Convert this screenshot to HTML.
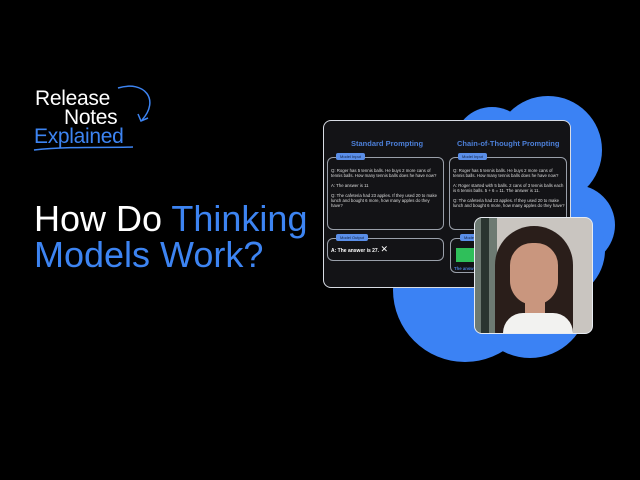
<!DOCTYPE html>
<html><head><meta charset="utf-8"><style>
*{margin:0;padding:0;box-sizing:border-box}
body{width:640px;height:480px;background:#000;overflow:hidden;position:relative;font-family:"Liberation Sans",sans-serif}
.a{position:absolute}
.t{color:#fff;font-size:36px;letter-spacing:0;line-height:1}
.b{color:#3d84f2}
.box{position:absolute;border:1px solid #9aa0aa;border-radius:6px}
.lab{position:absolute;background:#5a8ee8;color:#102040;font-size:4px;border-radius:2px;padding:1px 4px;height:7px;line-height:5px}
.sm{position:absolute;color:#ddd;font-size:4.3px;line-height:5px}
.h{position:absolute;color:#4c7fd8;font-size:7.5px;font-weight:bold}
</style></head><body>
<svg class="a" style="left:0;top:0" width="640" height="480">
<g fill="#3b82f4">
<circle cx="548" cy="150" r="54"/>
<circle cx="492" cy="145" r="38"/>
<circle cx="575" cy="225" r="40"/>
<circle cx="465" cy="290" r="72"/>
<circle cx="530" cy="300" r="58"/>
<circle cx="555" cy="250" r="50"/>
</g>
<path d="M118 88 C145 80 160 100 142 120" stroke="#3d84f2" stroke-width="1.5" fill="none"/>
<path d="M138 114 L141 121 L148 118" stroke="#3d84f2" stroke-width="1.5" fill="none"/>
<path d="M34 150 C70 146 110 148 133 147" stroke="#3d84f2" stroke-width="1.5" fill="none"/>
</svg>
<div class="a" style="left:35px;top:87px;color:#fff;font-size:21px;letter-spacing:-0.3px">Release</div>
<div class="a" style="left:64px;top:106px;color:#fff;font-size:21px;letter-spacing:-0.3px">Notes</div>
<div class="a b" style="left:34px;top:125px;font-size:21px;letter-spacing:-0.3px">Explained</div>
<div class="a t" style="left:34px;top:201px">How Do <span class="b">Thinking</span></div>
<div class="a t b" style="left:34px;top:237px">Models Work?</div>

<div class="a" style="left:323px;top:120px;width:248px;height:168px;background:#131316;border:1.5px solid #d8dce4;border-radius:8px"></div>
<div class="h" style="left:351px;top:139px">Standard Prompting</div>
<div class="h" style="left:457px;top:139px">Chain-of-Thought Prompting</div>
<div class="box" style="left:327px;top:157px;width:117px;height:73px"></div>
<div class="box" style="left:449px;top:157px;width:118px;height:73px"></div>
<div class="box" style="left:327px;top:238px;width:117px;height:23px"></div>
<div class="box" style="left:450px;top:238px;width:60px;height:35px"></div>
<div class="lab" style="left:336px;top:153px">Model Input</div>
<div class="lab" style="left:458px;top:153px">Model Input</div>
<div class="lab" style="left:336px;top:234px">Model Output</div>
<div class="lab" style="left:460px;top:234px">Mode</div>
<div class="sm" style="left:331px;top:168px;width:110px">Q: Roger has 5 tennis balls. He buys 2 more cans of tennis balls. How many tennis balls does he have now?<br><br>A: The answer is 11<br><br>Q: The cafeteria had 23 apples. If they used 20 to make lunch and bought 6 more, how many apples do they have?</div>
<div class="sm" style="left:453px;top:168px;width:112px">Q: Roger has 5 tennis balls. He buys 2 more cans of tennis balls. How many tennis balls does he have now?<br><br>A: Roger started with 5 balls. 2 cans of 3 tennis balls each is 6 tennis balls. 5 + 6 = 11. The answer is 11.<br><br>Q: The cafeteria had 23 apples. If they used 20 to make lunch and bought 6 more, how many apples do they have?</div>
<div class="sm" style="left:331px;top:247px;font-weight:bold;color:#fff;font-size:5px">A: The answer is 27. <span style="font-size:9px;font-weight:normal">✕</span></div>
<div class="a" style="left:456px;top:248px;width:20px;height:14px;background:#2fbf5a"></div>
<div class="sm" style="left:454px;top:266px;color:#4c7fd8;font-weight:bold">The answ</div>

<div class="a" style="left:474px;top:217px;width:119px;height:117px;border:1.5px solid #e8ecf2;border-radius:8px;overflow:hidden;background:#c9c5c0">
<div class="a" style="left:0;top:0;width:22px;height:117px;background:#6d7a72"></div>
<div class="a" style="left:6px;top:0;width:8px;height:117px;background:#2a3530"></div>
<div class="a" style="left:20px;top:8px;width:78px;height:115px;background:#2a1e1a;border-radius:40px 40px 10px 10px"></div>
<div class="a" style="left:35px;top:25px;width:48px;height:62px;background:#c9967e;border-radius:24px 24px 26px 26px"></div>
<div class="a" style="left:50px;top:82px;width:20px;height:16px;background:#c9967e"></div>
<div class="a" style="left:28px;top:95px;width:70px;height:30px;background:#f2f2f0;border-radius:20px 20px 0 0"></div>
</div>
</body></html>
